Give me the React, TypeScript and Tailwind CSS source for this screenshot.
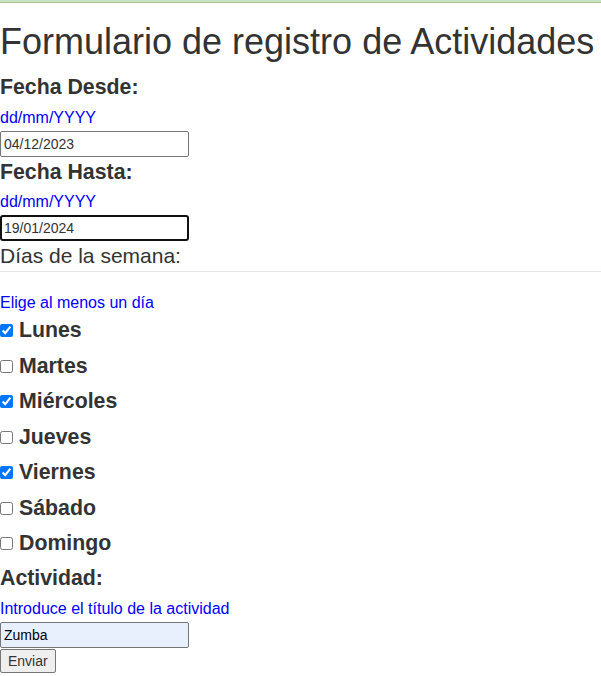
import { useState } from "react";

const DIAS = [
  { nombre: "Lunes", marcado: true },
  { nombre: "Martes", marcado: false },
  { nombre: "Miércoles", marcado: true },
  { nombre: "Jueves", marcado: false },
  { nombre: "Viernes", marcado: true },
  { nombre: "Sábado", marcado: false },
  { nombre: "Domingo", marcado: false },
];

function Campo({
  titulo,
  ayuda,
  valor,
  foco,
}: {
  titulo: string;
  ayuda: string;
  valor: string;
  foco?: boolean;
}) {
  return (
    <div>
      <label className="block text-[21.3px] font-bold leading-[30px]">{titulo}</label>
      <div className="mt-[5.5px] text-[16px] leading-[20px] text-[#0000ff]">{ayuda}</div>
      <input
        type="text"
        defaultValue={valor}
        className={
          foco
            ? "mt-[3px] block h-[26px] w-[189px] rounded-[3px] border-2 border-[#101010] px-[2px] text-[14px] text-[#333] outline-none"
            : "mt-[3px] block h-[26px] w-[189px] rounded-[2px] border border-[#767676] px-[3px] text-[14px] text-[#333] outline-none"
        }
      />
    </div>
  );
}

export default function App() {
  const [dias, setDias] = useState(DIAS);

  return (
    <div className="min-h-[676px] bg-white font-['Liberation_Sans',Arial,sans-serif] text-[14px] leading-[20px] text-[#333]">
      {/* barra superior */}
      <div className="h-[3px] border-b border-[#a3c79b] bg-[#c9e2c1]" />

      <h1 className="mt-[19px] mb-[10px] text-[36px] font-normal leading-[40px]">
        Formulario de registro de Actividades
      </h1>

      <form onSubmit={(e) => e.preventDefault()}>
        <Campo titulo="Fecha Desde:" ayuda="dd/mm/YYYY" valor="04/12/2023" />
        <Campo titulo="Fecha Hasta:" ayuda="dd/mm/YYYY" valor="19/01/2024" foco />

        <fieldset>
          <legend className="block w-full border-b border-[#e5e5e5] text-[21px] leading-[30px]">
            Días de la semana:
          </legend>
          <div className="mt-[20.5px] text-[16px] leading-[20px] text-[#0000ff]">Elige al menos un día</div>
          <div className="flex flex-col">
            {dias.map((d, i) => (
              <label key={d.nombre} className="flex h-[35.5px] items-center gap-[6px]">
                <input
                  type="checkbox"
                  checked={d.marcado}
                  onChange={() =>
                    setDias(dias.map((x, j) => (j === i ? { ...x, marcado: !x.marcado } : x)))
                  }
                  className="m-0 mt-[1px] h-[13px] w-[13px] accent-[#0075ff]"
                />
                <span className="text-[21.3px] font-bold leading-[30px]">{d.nombre}</span>
              </label>
            ))}
          </div>
        </fieldset>

        <div className="mt-[2px]">
          <label className="block text-[21.3px] font-bold leading-[30px]">Actividad:</label>
          <div className="mt-[6px] text-[16px] leading-[20px] text-[#0000ff]">
            Introduce el título de la actividad
          </div>
          <input
            type="text"
            defaultValue="Zumba"
            className="mt-[3px] block h-[26px] w-[189px] rounded-[2px] border border-[#767676] bg-[#e8f0fe] px-[3px] text-[14px] text-black outline-none"
          />
        </div>

        <button
          type="submit"
          className="mt-[1px] block h-[24px] rounded-[2px] border border-[#767676] bg-[#efefef] px-[7px] text-[14px] text-[#333]"
        >
          Enviar
        </button>
      </form>
    </div>
  );
}
